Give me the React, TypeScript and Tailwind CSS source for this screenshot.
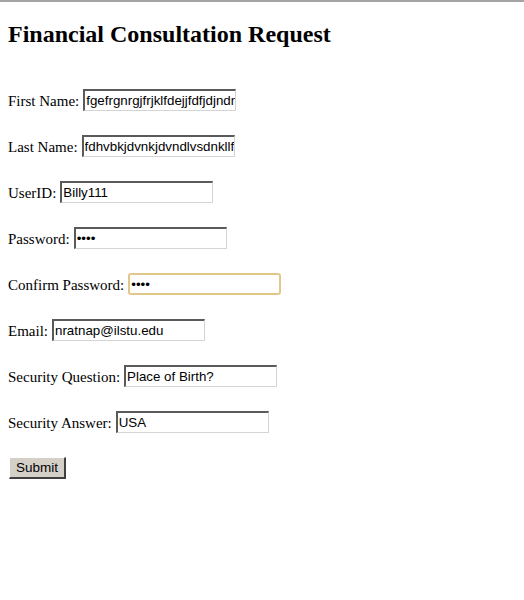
import React from "react";

const serif = { fontFamily: '"Liberation Serif", "Times New Roman", serif' };

const inputCls =
  "w-[153px] h-[22px] box-border border-t-2 border-l-2 border-b border-r border-t-[#5a5a5a] border-l-[#5a5a5a] border-b-[#d4d4d4] border-r-[#d4d4d4] bg-white pl-[1px] pr-0 text-[13.33px] text-black outline-none font-['Liberation_Sans',Arial,sans-serif]";

const focusCls =
  "w-[153px] h-[22px] box-border border-2 border-[#e2c78a] rounded-[3px] bg-white pl-[1px] pr-0 text-[13.33px] text-black outline-none font-['Liberation_Sans',Arial,sans-serif]";

function Row({
  label,
  value,
  type = "text",
  focused = false,
}: {
  label: string;
  value: string;
  type?: string;
  focused?: boolean;
}) {
  return (
    <div className="flex items-center h-[22px]">
      <span className="text-[15px] leading-none text-black mr-[4px] pt-[2px]" style={serif}>
        {label}
      </span>
      <input
        type={type}
        defaultValue={value}
        readOnly
        className={focused ? focusCls : inputCls}
      />
    </div>
  );
}

export default function App() {
  return (
    <div className="min-h-[600px] w-[524px] bg-white border-t-2 border-[#a4a4a4]">
      <div className="px-2">
        <h2
          className="mt-[18px] text-[24px] leading-[28px] font-bold text-black"
          style={serif}
        >
          Financial Consultation Request
        </h2>
        <div className="mt-[41px] flex flex-col gap-[24px]">
          <Row label="First Name:" value="fgefrgnrgjfrjklfdejjfdfjdjndnfcdf" />
          <Row label="Last Name:" value="fdhvbkjdvnkjdvndlvsdnkllfvnsd" />
          <Row label="UserID:" value="Billy111" />
          <Row label="Password:" value="1234" type="password" />
          <Row label="Confirm Password:" value="1234" type="password" focused />
          <Row label="Email:" value="nratnap@ilstu.edu" />
          <Row label="Security Question:" value="Place of Birth?" />
          <Row label="Security Answer:" value="USA" />
          <div className="flex">
            <button
              type="button"
              className="ml-[1px] w-[57px] h-[22px] box-border bg-[#d4d0c8] border-t border-l border-b-2 border-r-2 border-t-white border-l-white border-b-[#404040] border-r-[#404040] text-[13.5px] text-black leading-none font-['Liberation_Sans',Arial,sans-serif]"
            >
              Submit
            </button>
          </div>
        </div>
      </div>
    </div>
  );
}
